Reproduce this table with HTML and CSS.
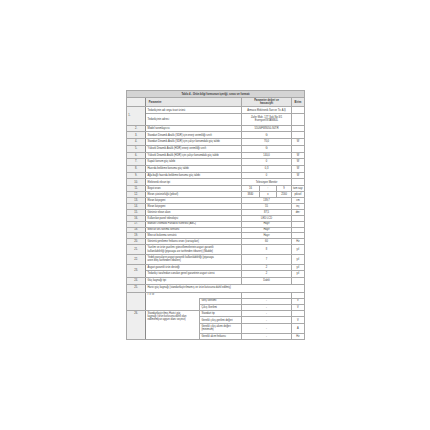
FILE: index.html
```html
<!DOCTYPE html>
<html lang="tr">
<head>
<meta charset="utf-8">
<title>Ürün bilgi formu</title>
<link rel="stylesheet" href="styles.css">
</head>
<body>
<div class="page">
<table class="sheet">
<colgroup>
<col class="c-no"><col class="c-pa"><col class="c-pb"><col class="c-va"><col class="c-vb"><col class="c-vc"><col class="c-un">
</colgroup>
<tr class="h-title"><td class="title" colspan="7">Tablo 4 - Ürün bilgi formunun içeriği, sırası ve formatı</td></tr>
<tr class="h-head head"><td class="no"></td><td class="param hb" colspan="2">Parametre</td><td class="val hb" colspan="3">Parametre değeri ve<br>hassasiyet</td><td class="unit hb">Birim</td></tr>
<tr class="h-a"><td class="no left" rowspan="2">1.</td><td class="param" colspan="2">Tedarikçinin adı veya ticari ürünü</td><td class="val" colspan="3">Armaco Elektronik San ve Tic A.Ş</td><td class="unit"></td></tr>
<tr class="h-addr"><td class="param" colspan="2">Tedarikçinin adresi</td><td class="val" colspan="3">Zafer Mah. 177 Sok No:3/1<br>Esenyurt/İSTANBUL</td><td class="unit"></td></tr>
<tr class="h-a"><td class="no">2.</td><td class="param" colspan="2">Model tanımlayıcısı</td><td class="val" colspan="3">55UGFW8050-S0TR</td><td class="unit"></td></tr>
<tr class="h-a"><td class="no">3.</td><td class="param" colspan="2">Standart Dinamik Aralık (SDR) için enerji verimliliği sınıfı</td><td class="val" colspan="3">G</td><td class="unit"></td></tr>
<tr class="h-a"><td class="no">4.</td><td class="param" colspan="2">Standart Dinamik Aralık (SDR) için çalışır konumdaki güç talebi</td><td class="val" colspan="3">70,0</td><td class="unit">W</td></tr>
<tr class="h-a"><td class="no">5.</td><td class="param" colspan="2">Yüksek Dinamik Aralık (HDR) enerji verimliliği sınıfı</td><td class="val" colspan="3">G</td><td class="unit"></td></tr>
<tr class="h-a"><td class="no">6.</td><td class="param" colspan="2">Yüksek Dinamik Aralık (HDR) için çalışır konumdaki güç talebi</td><td class="val" colspan="3">140,0</td><td class="unit">W</td></tr>
<tr class="h-a"><td class="no">7.</td><td class="param" colspan="2">Kapalı konum güç talebi</td><td class="val" colspan="3">0</td><td class="unit">W</td></tr>
<tr class="h-a"><td class="no">8.</td><td class="param" colspan="2">Hazırda bekleme konumu güç talebi</td><td class="val" colspan="3">0,3</td><td class="unit">W</td></tr>
<tr class="h-a"><td class="no">9.</td><td class="param" colspan="2">Ağa bağlı hazırda bekleme konumu güç talebi</td><td class="val" colspan="3">0</td><td class="unit">W</td></tr>
<tr class="h-a"><td class="no">10.</td><td class="param" colspan="2">Elektronik ekran tipi</td><td class="val" colspan="3">Televizyon Monitör</td><td class="unit"></td></tr>
<tr class="h-b"><td class="no">11.</td><td class="param" colspan="2">Boyut oranı</td><td class="val">16</td><td class="val">:</td><td class="val">9</td><td class="unit">tam sayı</td></tr>
<tr class="h-b"><td class="no">12.</td><td class="param" colspan="2">Ekran çözünürlüğü (piksel)</td><td class="val">3840</td><td class="val">x</td><td class="val">2160</td><td class="unit">piksel</td></tr>
<tr class="h-b"><td class="no">13.</td><td class="param" colspan="2">Ekran köşegeni</td><td class="val" colspan="3">139,7</td><td class="unit">cm</td></tr>
<tr class="h-b"><td class="no">14.</td><td class="param" colspan="2">Ekran köşegeni</td><td class="val" colspan="3">55</td><td class="unit">inç</td></tr>
<tr class="h-b"><td class="no">15.</td><td class="param" colspan="2">Görünür ekran alanı</td><td class="val" colspan="3">87,5</td><td class="unit">dm²</td></tr>
<tr class="h-b"><td class="no">16.</td><td class="param" colspan="2">Kullanılan panel teknolojisi</td><td class="val" colspan="3">LED LCD</td><td class="unit"></td></tr>
<tr class="h-b"><td class="no">17.</td><td class="param" colspan="2">Manuel Otomatik Parlaklık Kontrolü (ABC)</td><td class="val" colspan="3">Hayır</td><td class="unit"></td></tr>
<tr class="h-b"><td class="no">18.</td><td class="param" colspan="2">Mevcut ses tanıma sensörü</td><td class="val" colspan="3">Hayır</td><td class="unit"></td></tr>
<tr class="h-b"><td class="no">19.</td><td class="param" colspan="2">Mevcut bulunma sensörü</td><td class="val" colspan="3">Hayır</td><td class="unit"></td></tr>
<tr class="h-b"><td class="no">20.</td><td class="param" colspan="2">Görüntü yenileme frekansı oranı (varsayılan)</td><td class="val" colspan="3">60</td><td class="unit">Hz</td></tr>
<tr class="h-2"><td class="no">21.</td><td class="param" colspan="2">Yazılım ve ürün yazılımı güncellemelerinin asgari garantili<br>kullanılabilirliği (piyasaya arz tarihinden itibaren) (Madde)</td><td class="val" colspan="3">8</td><td class="unit">yıl</td></tr>
<tr class="h-2"><td class="no">22.</td><td class="param" colspan="2">Yedek parçaların asgari garantili kullanılabilirliği (piyasaya<br>arzın bitiş tarihinden itibaren)</td><td class="val" colspan="3">7</td><td class="unit">yıl</td></tr>
<tr class="h-a"><td class="no" rowspan="2">23.</td><td class="param" colspan="2">Asgari garantili ürün desteği</td><td class="val" colspan="3">2</td><td class="unit">yıl</td></tr>
<tr class="h-a"><td class="param" colspan="2">Tedarikçi tarafından sunulan genel garantinin asgari süresi</td><td class="val" colspan="3">2</td><td class="unit">yıl</td></tr>
<tr class="h-a"><td class="no">24.</td><td class="param" colspan="2">Güç kaynağı tipi</td><td class="val" colspan="3">Dahili</td><td class="unit"></td></tr>
<tr class="h-25"><td class="no">25.</td><td class="param" colspan="6">Harici güç kaynağı (standartlaştırılmamış ve ürün kutusuna dahil edilmiş)</td></tr>
<tr class="h-c"><td class="no" rowspan="3"></td><td class="param top open-r" rowspan="3">i: ii: iii:</td><td class="blank"></td><td class="val" colspan="3"></td><td class="unit"></td></tr>
<tr class="h-c"><td class="sub">Giriş Gerilimi</td><td class="val" colspan="3">-</td><td class="unit">V</td></tr>
<tr class="h-a"><td class="sub">Çıkış Gerilimi</td><td class="val" colspan="3">-</td><td class="unit">V</td></tr>
<tr class="h-c"><td class="no top" rowspan="4">26.</td><td class="param top open-r" rowspan="4">Standartlaştırılmış Harici güç<br>kaynağı (ürün kutusuna dahil olan<br>edilmemişse uygun olanı seçiniz)</td><td class="sub">Standart tip</td><td class="val" colspan="3">-</td><td class="unit"></td></tr>
<tr class="h-a"><td class="sub">Gerekli çıkış gerilimi değeri</td><td class="val" colspan="3">-</td><td class="unit">V</td></tr>
<tr class="h-2"><td class="sub">Gerekli çıkış akımı değeri<br>(minimum)</td><td class="val" colspan="3">-</td><td class="unit">A</td></tr>
<tr class="h-a"><td class="sub">Gerekli akım frekansı</td><td class="val" colspan="3">-</td><td class="unit">Hz</td></tr>
</table>
</div>
</body>
</html>
```
FILE: styles.css
```css
html, body {
  margin: 0;
  padding: 0;
  background: #ffffff;
}
.page {
  width: 430px;
  height: 430px;
  padding: 90px 0 0 126px;
  box-sizing: border-box;
}
.sheet {
  border-collapse: collapse;
  table-layout: fixed;
  width: 178px;
  font-family: "Liberation Sans", Arial, sans-serif;
  font-size: 2.6px;
  line-height: 3.2px;
  color: #3a3a3a;
  border: 1px solid #7a7a7a;
}
.c-no { width: 19.3px; }
.c-pa { width: 54px; }
.c-pb { width: 42px; }
.c-va { width: 17.3px; }
.c-vb { width: 17.7px; }
.c-vc { width: 14.5px; }
.c-un { width: 13.2px; }
.sheet td {
  border: 1px solid #a8a8a8;
  padding: 0 1.2px;
  vertical-align: middle;
  white-space: nowrap;
  overflow: hidden;
}
.h-title { height: 7.3px; }
.h-head { height: 9px; }
.h-a { height: 6.7px; }
.h-b { height: 5.95px; }
.h-c { height: 6px; }
.h-2 { height: 9.6px; }
.h-addr { height: 11.8px; }
.h-25 { height: 8px; }
.title {
  background: #d4d4d4;
  text-align: center;
  font-weight: bold;
  font-size: 2.7px;
}
.head td { background: #e6e6e6; }
.hb { font-weight: bold; }
.sheet td.no {
  background: #eeeeee;
  text-align: center;
  border-right: 1px solid #8a8a8a;
}
.sheet td.left { text-align: left; }
.sheet td.top { vertical-align: top; padding-top: 0.6px; }
.param { text-align: left; }
.head .param { padding-left: 2.5px; }
.val { text-align: center; }
.unit { text-align: center; }
.sub { text-align: left; padding-left: 1.8px; }
.sheet td.open-r { border-right: none; }
.sheet td.blank { border-left: none; }
```
